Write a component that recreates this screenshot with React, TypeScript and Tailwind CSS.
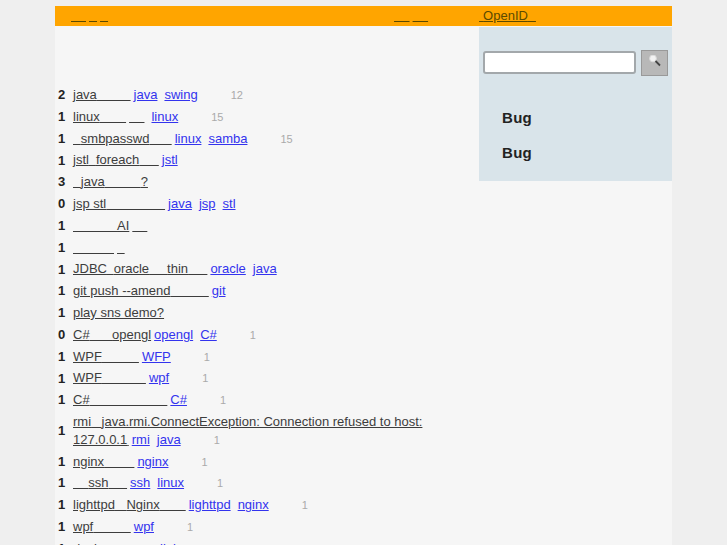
const n = "\u00a0";

type Part = string | number;
type Row = { c: string; t: Part[]; extra?: number; tags: string[]; v?: string };

const rows: Row[] = [
  { c: "2", t: ["java", 33.7], tags: ["java", "swing"], v: "12" },
  { c: "1", t: ["linux", 26.3], extra: 15.4, tags: ["linux"], v: "15" },
  { c: "1", t: [7.8, "smbpasswd", 22.2], tags: ["linux", "samba"], v: "15" },
  { c: "1", t: ["jstl", 7, "foreach", 19.5], tags: ["jstl"] },
  { c: "3", t: [7.8, "java", 36, "?"], tags: [] },
  { c: "0", t: ["jsp stl", 58.8], tags: ["java", "jsp", "stl"] },
  { c: "1", t: [44, "AI"], extra: 15, tags: [] },
  { c: "1", t: [41], extra: 7.6, tags: [] },
  { c: "1", t: ["JDBC", 6.7, "oracle", 18, "thin", 19.3], tags: ["oracle", "java"] },
  { c: "1", t: ["git push --amend", 38.2], tags: ["git"] },
  { c: "1", t: ["play sns demo?"], tags: [] },
  { c: "0", t: ["C#", 22.4, "opengl"], tags: ["opengl", "C#"], v: "1" },
  { c: "1", t: ["WPF", 37], tags: ["WFP"], v: "1" },
  { c: "1", t: ["WPF", 44], tags: ["wpf"], v: "1" },
  { c: "1", t: ["C#", 77.7], tags: ["C#"], v: "1" },
  { c: "1", t: ["rmi", 10.5, "java.rmi.ConnectException: Connection refused to host: 127.0.0.1", 1.5], tags: ["rmi", "java"], v: "1" },
  { c: "1", t: ["nginx", 30.3], tags: ["nginx"], v: "1" },
  { c: "1", t: [15.3, "ssh", 18.5], tags: ["ssh", "linux"], v: "1" },
  { c: "1", t: ["lighttpd", 11.5, "Nginx", 26], tags: ["lighttpd", "nginx"], v: "1" },
  { c: "1", t: ["wpf", 37.5], tags: ["wpf"], v: "1" },
  { c: "1", t: ["docker", 45], tags: ["jinja"], v: "1" },
];

function Blank({ w }: { w: number }) {
  return <span style={{ letterSpacing: w - 3.6 }}>{n}</span>;
}

function Title({ parts }: { parts: Part[] }) {
  return (
    <>
      {parts.map((p, i) => (typeof p === "number" ? <Blank key={i} w={p} /> : <span key={i}>{p}</span>))}
    </>
  );
}

export default function App() {
  return (
    <div className="h-[545px] overflow-hidden bg-[#efefef] pt-[6px] pl-[55px] font-['Liberation_Sans',Arial,sans-serif] text-[13px] text-[#3d3d3d]">
      <div className="w-[617px] bg-[#f6f6f6]">
        <div className="flex h-[20px] items-start bg-[#ffa500] pl-[16px] leading-[20px] text-[#5c4a00]">
          <span className="underline"><Blank w={15} /></span>
          <span className="ml-[3px] underline"><Blank w={8} /></span>
          <span className="ml-[3px] underline"><Blank w={8} /></span>
          <span className="ml-[286px] underline"><Blank w={15.5} /></span>
          <span className="ml-[3px] underline"><Blank w={15.5} /></span>
          <span className="ml-[51px] underline"><Blank w={4} />OpenID<Blank w={8} /></span>
        </div>
        <div className="flex items-start pt-px">
          <div className="w-[424px] pt-[57px] pl-[3px]">
            {rows.map((r, i) => (
              <div key={i} className="flex items-center">
                <span className="w-[15px] shrink-0 font-bold text-[#222222]">{r.c}</span>
                <div className="py-[2px] leading-[17.8px]">
                  <span className="underline"><Title parts={r.t} /></span>
                  {r.extra && <span className="ml-[3px] mr-[4px] underline"><Blank w={r.extra} /></span>}
                  {r.tags.map((t) => (
                    <a key={t} href="#" className="ml-[3px] mr-[4px] text-[#3333ee] underline">{t}</a>
                  ))}
                  {r.v && <span className="ml-[29px] text-[11px] leading-none text-[#aaaaaa]">{r.v}</span>}
                </div>
              </div>
            ))}
          </div>
          <aside className="ml-auto h-[154px] w-[193px] bg-[#d9e4ea] pt-[23px]">
            <div className="flex items-start pl-[4px]">
              <input className="mt-px h-[23px] w-[153px] rounded-[3px] border-2 border-[#a3a8ab] bg-white" />
              <button className="ml-[5px] flex h-[26px] w-[27px] items-center justify-center border border-[#999999] bg-[#b8b8b8]">
                <svg width="16" height="16" viewBox="0 0 16 16">
                  <circle cx="6" cy="3.5" r="3.4" fill="#f2f2f2" stroke="#d8d8d8" />
                  <path d="M8.5 6 L13 10.5" stroke="#444444" strokeWidth="1.8" />
                </svg>
              </button>
            </div>
            <div className="mt-[24px] pl-[23px] text-[15px] leading-[35px] font-bold tracking-[0.3px] text-[#222222]">
              <div>Bug</div>
              <div>Bug</div>
            </div>
          </aside>
        </div>
      </div>
    </div>
  );
}
